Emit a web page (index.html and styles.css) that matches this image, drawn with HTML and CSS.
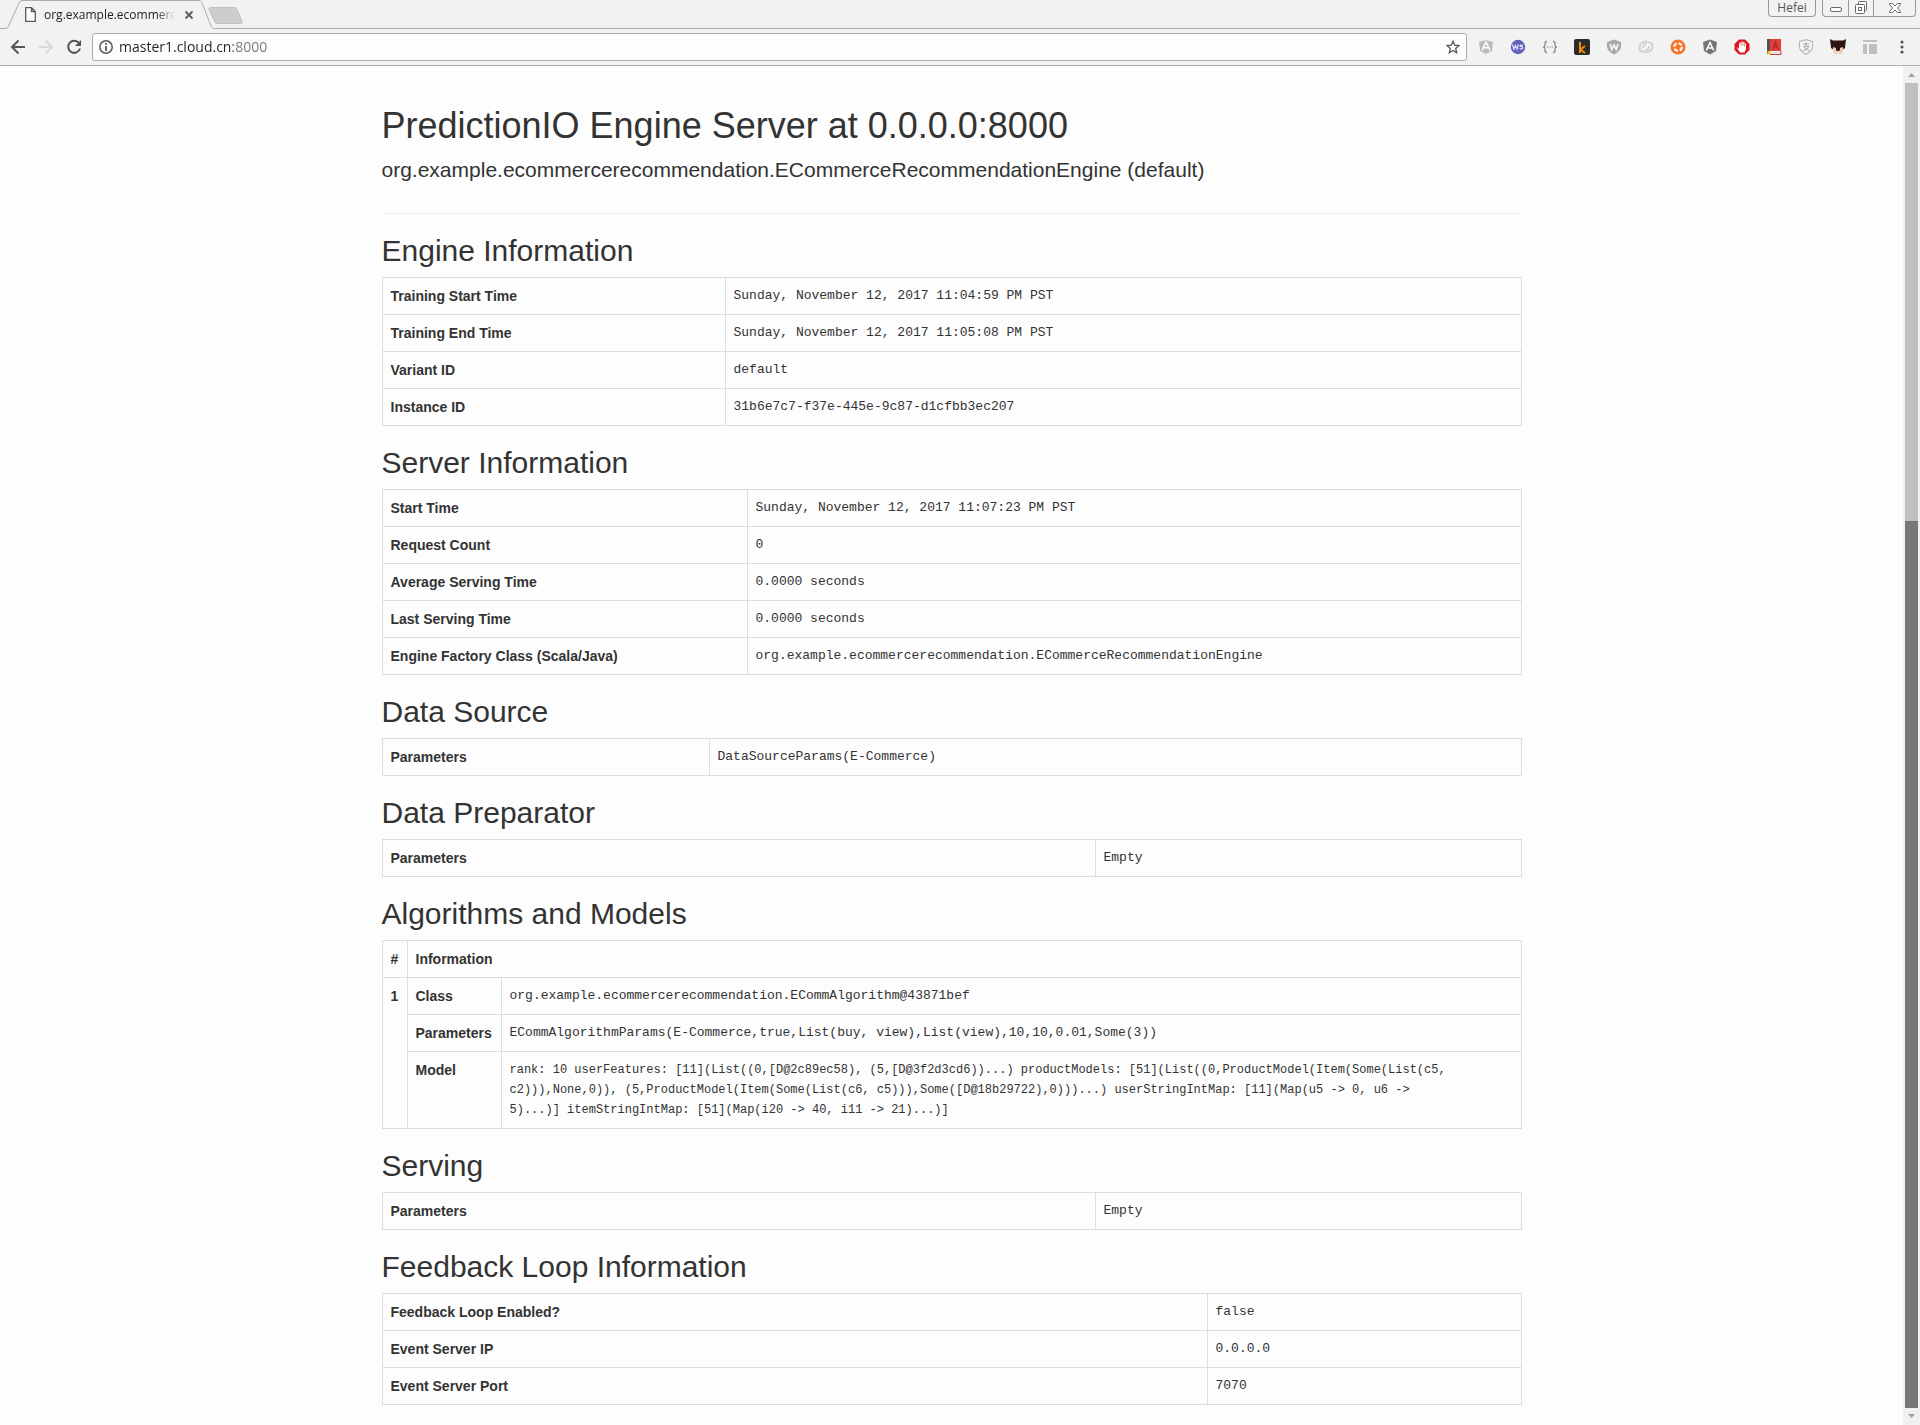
FILE: index.html
```html
<!DOCTYPE html>
<html lang="en">
<head>
<meta charset="utf-8">
<title>org.example.ecommercerecommendation.ECommerceRecommendationEngine (default)</title>
<link rel="stylesheet" href="styles.css">
</head>
<body>
<header class="browser">
  <div class="tabstrip">
    <div class="tab">
      <svg class="tab-shape" width="208" height="29" viewBox="0 0 208 29"><path d="M0 28.500H1Q2 28 3 25L13 3Q14 .5 16 .5H193Q195 .5 196 3L206 26Q207 28.500 208 28.500V29H0Z" fill="#f2f2f2"/><path d="M0 28.500Q2 28.500 3 25L13 3Q14 .5 16 .5H193Q195 .5 196 3L205 26Q206 28.500 208 28.500" fill="none" stroke="#adadad"/></svg>
      <svg class="tab-file" width="11" height="15" viewBox="0 0 11 15"><path d="M.7 .7H6.500L10.300 4.500V14.300H.7ZM6.500 .7V4.500H10.300" fill="#fff" stroke="#5a5a5a" stroke-width="1.300"/></svg>
      <span class="tab-title">org.example.ecommercerecommendation</span>
      <button class="tab-close" type="button" aria-label="Close tab"><svg width="10" height="10" viewBox="0 0 10 10"><path d="M1.500 1.500L8.500 8.500M8.500 1.500L1.500 8.500" stroke="#5a5a5a" stroke-width="1.800"/></svg></button>
    </div>
    <button class="new-tab" type="button" aria-label="New tab"><svg width="36" height="18" viewBox="0 0 36 18"><path d="M3 .5H26Q28 .5 29 2.500L34 14.500Q34.500 16.500 32.500 16.500H9Q7.500 16.500 6.500 14.500L1 2.500Q.5 .5 3 .5Z" fill="#cdcdcd" stroke="#bebebe"/></svg></button>
    <div class="window-controls">
      <button class="profile" type="button">Hefei</button>
      <div class="window-buttons">
        <button type="button" aria-label="Minimize"><svg width="14" height="14" viewBox="0 0 14 14"><rect x="1.500" y="6.500" width="11" height="4" rx="1.500" fill="#fff" stroke="#666"/></svg></button>
        <button type="button" aria-label="Restore"><svg width="14" height="14" viewBox="0 0 14 14"><g fill="#fff" stroke="#666"><rect x="4.500" y=".5" width="8" height="9" rx="1"/><rect x="1.500" y="3.500" width="9" height="9" rx="1"/><rect x="4.500" y="6.500" width="3" height="3"/></g></svg></button>
        <button class="wide" type="button" aria-label="Close"><svg width="14" height="14" viewBox="0 0 14 14"><path d="M1.500 2.500H4.500L7 5L9.500 2.500H12.500V3.500L9.500 7L12.500 10.500V11.500H9.500L7 9L4.500 11.500H1.500V10.500L4.500 7L1.500 3.500Z" fill="#fff" stroke="#666"/></svg></button>
      </div>
    </div>
  </div>
  <div class="toolbar">
    <nav class="nav-buttons">
      <button type="button" aria-label="Back"><svg width="16" height="16" viewBox="0 0 16 16"><path d="M15 8H2.500M8.500 1.500L2 8L8.500 14.500" fill="none" stroke="#555" stroke-width="2"/></svg></button>
      <button type="button" aria-label="Forward"><svg width="16" height="16" viewBox="0 0 16 16"><path d="M1 8H13.500M7.500 1.500L14 8L7.500 14.500" fill="none" stroke="#d8d8d8" stroke-width="2"/></svg></button>
      <button type="button" aria-label="Reload"><svg width="16" height="16" viewBox="0 0 16 16"><path d="M13 4.200A6 6 0 1 0 14 9.500" fill="none" stroke="#555" stroke-width="2"/><path d="M15 1V7H9Z" fill="#555"/></svg></button>
    </nav>
    <div class="omnibox">
      <svg width="14" height="14" viewBox="0 0 14 14"><circle cx="7" cy="7" r="6.200" fill="none" stroke="#5a5a5a" stroke-width="1.500"/><path d="M7 3V4.800M7 6V11" stroke="#5a5a5a" stroke-width="1.800"/></svg>
      <input class="url" type="text" aria-label="Address" value="master1.cloud.cn:8000">
      <button type="button" aria-label="Bookmark"><svg width="14" height="14" viewBox="0 0 14 14"><path d="M7 1.200L8.700 5.200L13 5.600L9.700 8.400L10.700 12.700L7 10.400L3.300 12.700L4.300 8.400L1 5.600L5.300 5.200Z" fill="#fff" stroke="#555" stroke-width="1.300"/></svg></button>
    </div>
    <div class="extensions">
      <button type="button" aria-label="Angular inspector"><svg width="16" height="16" viewBox="0 0 16 16"><path d="M8 1L15 3L14 12L8 15L2 12L1 3Z" fill="#bcbcbc"/><path d="M4 11.500L8 3L12 11.500M5.500 8.800H10.500" fill="none" stroke="#fff" stroke-width="1.500"/></svg></button>
      <button type="button" aria-label="Web socket client"><svg width="16" height="16" viewBox="0 0 16 16"><circle cx="8" cy="8" r="7.200" fill="#6462bd"/><path d="M2.500 5.500L4 10L5.500 6.500L7 10L8.500 5.500M13 6.500Q10 5.500 10.200 7.200Q13.500 8 12.600 9.500Q11 10.500 9.600 9.400" fill="none" stroke="#e4e4fa" stroke-width="1.200"/></svg></button>
      <button type="button" aria-label="JSON viewer"><svg width="16" height="16" viewBox="0 0 16 16"><path d="M5 2.500Q3 2.500 3 4.500V6.500Q3 8 1 8Q3 8 3 9.500V11.500Q3 13.500 5 13.500M11 2.500Q13 2.500 13 4.500V6.500Q13 8 15 8Q13 8 13 9.500V11.500Q13 13.500 11 13.500" fill="none" stroke="#888" stroke-width="1.300"/><path d="M5 8H6.500M7.500 8H8.500M9.500 8H11" stroke="#999"/></svg></button>
      <button type="button" aria-label="Kimono"><svg width="16" height="16" viewBox="0 0 16 16"><rect width="16" height="16" rx="2" fill="#2b2b2b"/><path d="M6 3V14M11 7L6.500 10.500L11 14" fill="none" stroke="#f58a07" stroke-width="2"/></svg></button>
      <button type="button" aria-label="Wappalyzer"><svg width="16" height="16" viewBox="0 0 16 16"><path d="M8 .5L15 3V8Q14 13 8 15.500Q2 13 1 8V3Z" fill="#a9a9a9"/><path d="M4 5L5.800 10.500L8 6L10.200 10.500L12 5" fill="none" stroke="#fff" stroke-width="1.500"/></svg></button>
      <button type="button" aria-label="Sync"><svg width="16" height="16" viewBox="0 0 16 16"><path d="M6.500 13Q1 13 1.500 8Q2.500 3 9 2.500M9.500 3Q15 3 14.500 8Q13.500 13 7 13.500" fill="none" stroke="#d2d2d2" stroke-width="2.200"/><path d="M5 9Q5 5 9 4M11 7Q11 11 7 12" fill="none" stroke="#bbb"/></svg></button>
      <button type="button" aria-label="Rings"><svg width="16" height="16" viewBox="0 0 16 16"><circle cx="8" cy="8" r="7.500" fill="#f5742b"/><circle cx="8" cy="8" r="3.800" fill="none" stroke="#fff" stroke-width="2.200" stroke-dasharray="4 1.970"/></svg></button>
      <button type="button" aria-label="Angular state"><svg width="16" height="16" viewBox="0 0 16 16"><path d="M8 .5L15 3L14 12L8 15.500L2 12L1 3Z" fill="#757575"/><path d="M4.300 11.500L8 3.500L11.700 11.500M5.800 9H10.200" fill="none" stroke="#fff" stroke-width="1.500"/></svg></button>
      <button type="button" aria-label="Ad blocker"><svg width="16" height="16" viewBox="0 0 16 16"><path d="M5 .5H11L15.500 5V11L11 15.500H5L.5 11V5Z" fill="#dd1620"/><path d="M5 5.500V10L3.600 8.300Q2.800 8.500 3.500 9.700L6 13.500H10.500L12 10V4.500H11V7.500H10.500V3H9.200V7H8.700V2.500H7.300V7H6.800V3.500H5.500Z" fill="#fff"/></svg></button>
      <button type="button" aria-label="Dictionary"><svg width="16" height="16" viewBox="0 0 16 16"><path d="M1 0H4V15H1Z" fill="#5b5050"/><path d="M4 0H15V12H4Z" fill="#de4138"/><path d="M3 13H15V14.500H3Z" fill="#ddd"/><path d="M15 12V15.500H4" fill="none" stroke="#c83931"/><path d="M7 10L9.500 3L12 10M8 7.500H11" fill="none" stroke="#b3262b" stroke-width="1.300"/><path d="M1.500 12H4V16L2.500 14.500L1.500 16Z" fill="#f4c20d"/></svg></button>
      <button type="button" aria-label="Payment guard"><svg width="16" height="16" viewBox="0 0 16 16"><path d="M8 .7L14.500 2.500V8Q14 12.500 8 15.300Q2 12.500 1.500 8V2.500Z" fill="#f7f7f7" stroke="#bbb" stroke-width="1.300"/><path d="M4.500 5H11.500M8 3V7M5 7.300H10.800Q9.500 10.500 4.500 12M6 8Q8 11 11.700 11.700" fill="none" stroke="#aaa" stroke-width="1.100"/></svg></button>
      <button type="button" aria-label="Tampering cat"><svg width="16" height="16" viewBox="0 0 16 16"><path d="M0 0L3 1.500H13L16 0L15 9L12 11H4L1 9Z" fill="#2c1714"/><path d="M3 8L6 9V12L8 11L10 12V9L13 8V12L11 15.500H9.500L8 13L6.500 15.500H5L3 12Z" fill="#f4ccb6"/><path d="M6.500 9.500H9.500V12H6.500Z" fill="#2c1714"/></svg></button>
      <button type="button" aria-label="Layout"><svg width="16" height="16" viewBox="0 0 16 16"><path d="M1 1H15V3H1ZM1 5H5V15H1ZM7 5H15V15H7Z" fill="#c0c0c0"/></svg></button>
      <button type="button" aria-label="Menu"><svg width="16" height="16" viewBox="0 0 16 16"><g fill="#555"><circle cx="8" cy="3" r="1.600"/><circle cx="8" cy="8" r="1.600"/><circle cx="8" cy="13" r="1.600"/></g></svg></button>
    </div>
  </div>
</header>
<div class="viewport">
  <main class="page">
    <div class="container">
      <div class="page-header">
        <h1>PredictionIO Engine Server at 0.0.0.0:8000</h1>
        <p class="lead">org.example.ecommercerecommendation.ECommerceRecommendationEngine (default)</p>
      </div>

      <h2>Engine Information</h2>
      <table>
        <colgroup><col class="col-engine"><col></colgroup>
        <tbody>
          <tr><th scope="row">Training Start Time</th><td>Sunday, November 12, 2017 11:04:59 PM PST</td></tr>
          <tr><th scope="row">Training End Time</th><td>Sunday, November 12, 2017 11:05:08 PM PST</td></tr>
          <tr><th scope="row">Variant ID</th><td>default</td></tr>
          <tr><th scope="row">Instance ID</th><td>31b6e7c7-f37e-445e-9c87-d1cfbb3ec207</td></tr>
        </tbody>
      </table>

      <h2>Server Information</h2>
      <table>
        <colgroup><col class="col-server"><col></colgroup>
        <tbody>
          <tr><th scope="row">Start Time</th><td>Sunday, November 12, 2017 11:07:23 PM PST</td></tr>
          <tr><th scope="row">Request Count</th><td>0</td></tr>
          <tr><th scope="row">Average Serving Time</th><td>0.0000 seconds</td></tr>
          <tr><th scope="row">Last Serving Time</th><td>0.0000 seconds</td></tr>
          <tr><th scope="row">Engine Factory Class (Scala/Java)</th><td>org.example.ecommercerecommendation.ECommerceRecommendationEngine</td></tr>
        </tbody>
      </table>

      <h2>Data Source</h2>
      <table>
        <colgroup><col class="col-source"><col></colgroup>
        <tbody>
          <tr><th scope="row">Parameters</th><td>DataSourceParams(E-Commerce)</td></tr>
        </tbody>
      </table>

      <h2>Data Preparator</h2>
      <table>
        <colgroup><col class="col-empty"><col></colgroup>
        <tbody>
          <tr><th scope="row">Parameters</th><td>Empty</td></tr>
        </tbody>
      </table>

      <h2>Algorithms and Models</h2>
      <table>
        <colgroup><col class="col-number"><col class="col-algorithm"><col></colgroup>
        <thead>
          <tr><th scope="col">#</th><th scope="col" colspan="2">Information</th></tr>
        </thead>
        <tbody>
          <tr><th scope="rowgroup" rowspan="3">1</th><th scope="row">Class</th><td>org.example.ecommercerecommendation.ECommAlgorithm@43871bef</td></tr>
          <tr><th scope="row">Parameters</th><td>ECommAlgorithmParams(E-Commerce,true,List(buy, view),List(view),10,10,0.01,Some(3))</td></tr>
          <tr><th scope="row">Model</th><td class="model">rank: 10 userFeatures: [11](List((0,[D@2c89ec58), (5,[D@3f2d3cd6))...) productModels: [51](List((0,ProductModel(Item(Some(List(c5,<br>c2))),None,0)), (5,ProductModel(Item(Some(List(c6, c5))),Some([D@18b29722),0)))...) userStringIntMap: [11](Map(u5 -&gt; 0, u6 -&gt;<br>5)...)] itemStringIntMap: [51](Map(i20 -&gt; 40, i11 -&gt; 21)...)]</td></tr>
        </tbody>
      </table>

      <h2>Serving</h2>
      <table>
        <colgroup><col class="col-empty"><col></colgroup>
        <tbody>
          <tr><th scope="row">Parameters</th><td>Empty</td></tr>
        </tbody>
      </table>

      <h2>Feedback Loop Information</h2>
      <table>
        <colgroup><col class="col-feedback"><col></colgroup>
        <tbody>
          <tr><th scope="row">Feedback Loop Enabled?</th><td>false</td></tr>
          <tr><th scope="row">Event Server IP</th><td>0.0.0.0</td></tr>
          <tr><th scope="row">Event Server Port</th><td>7070</td></tr>
        </tbody>
      </table>
    </div>
  </main>
  <div class="scrollbar" aria-hidden="true">
    <svg width="17" height="17" viewBox="0 0 17 17"><path d="M5 11L8.500 7L12 11Z" fill="#a3a3a3"/></svg>
    <div class="thumb"></div>
    <div class="thumb-active"></div>
    <svg width="17" height="17" viewBox="0 0 17 17"><path d="M5 6L8.500 10L12 6Z" fill="#a3a3a3"/></svg>
  </div>
</div>
</body>
</html>
```
FILE: styles.css
```css
* {
  box-sizing: border-box;
}

body {
  margin: 0;
  min-height: 100vh;
  display: flex;
  flex-direction: column;
  background: #fdfdfd;
  color: #333;
  font: 14px/20px "Liberation Sans", Arial, sans-serif;
}

button {
  display: flex;
  align-items: center;
  justify-content: center;
  padding: 0;
  border: 0;
  background: none;
}

svg {
  display: block;
  flex: none;
}

/* Browser window */
.browser {
  background: #f2f2f2;
  border-bottom: 1px solid #b0b0b0;
}

.tabstrip {
  display: flex;
  height: 29px;
  padding: 0 4px 0 6px;
  background: linear-gradient(#adadad, #adadad) bottom / 100% 1px no-repeat;
}

.tab {
  position: relative;
  display: flex;
  align-items: center;
  width: 204px;
  padding-left: 19px;
}

.tab-shape {
  position: absolute;
  top: 0;
  left: 0;
}

.tab-file,
.tab-title,
.tab-close {
  position: relative;
}

.tab-title {
  width: 132px;
  margin: 0 8px;
  overflow: hidden;
  white-space: nowrap;
  color: #222;
  font: 12px/20px "Open Sans", sans-serif;
  -webkit-mask-image: linear-gradient(to right, #000 112px, transparent);
  mask-image: linear-gradient(to right, #000 112px, transparent);
}

.new-tab {
  align-items: flex-start;
  padding-top: 7px;
  margin-left: -2px;
}

.window-controls {
  display: flex;
  gap: 6px;
  height: 17px;
  margin-left: auto;
}

.profile,
.window-buttons {
  border: 1px solid #999;
  border-top: 0;
  border-radius: 0 0 4px 4px;
}

.profile {
  width: 48px;
  color: #555;
  font: 12px/16px "Open Sans", sans-serif;
}

.window-buttons {
  display: flex;
}

.window-buttons button {
  width: 25px;
}

.window-buttons button + button {
  border-left: 1px solid #999;
}

.window-buttons .wide {
  width: 42px;
}

.toolbar {
  display: flex;
  align-items: center;
  height: 36px;
  padding: 0 10px;
}

.nav-buttons {
  display: flex;
  gap: 12px;
  margin-right: 10px;
}

.omnibox {
  display: flex;
  flex: 1;
  align-items: center;
  gap: 6px;
  height: 28px;
  padding: 0 6px;
  background: #fdfdfd;
  border: 1px solid #adadad;
  border-radius: 3px;
}

.url {
  flex: 1;
  min-width: 0;
  padding: 0;
  border: 0;
  outline: 0;
  font: 14px/20px "Open Sans", sans-serif;
  color: transparent;
  background: linear-gradient(to right, #222 114px, #777 114px);
  -webkit-background-clip: text;
  background-clip: text;
}

.extensions {
  display: flex;
  gap: 16px;
  margin-left: 11px;
}

/* Page */
.viewport {
  display: flex;
  flex: 1;
}

.page {
  flex: 1;
  min-width: 0;
  padding: 0 15px;
}

.container {
  display: flow-root;
  max-width: 1140px;
  margin: 0 auto;
}

.page-header {
  margin: 40px 0 20px;
  padding-bottom: 29px;
  border-bottom: 1px solid #eee;
}

h1,
h2 {
  font-weight: 400;
}

h1 {
  margin: 0 0 10px;
  font-size: 36px;
  line-height: 40px;
}

h2 {
  margin: 20px 0 10px;
  font-size: 30px;
  line-height: 33px;
}

.lead {
  margin: 0;
  font-size: 21px;
  line-height: 28px;
}

table {
  width: 100%;
  margin-bottom: 20px;
  border-collapse: collapse;
  table-layout: fixed;
}

th,
td {
  padding: 8px;
  border: 1px solid #ddd;
  text-align: left;
  vertical-align: top;
}

td {
  font-family: "Liberation Mono", monospace;
  font-size: 13px;
}

.model {
  font-size: 12px;
}

.col-engine { width: 343px; }
.col-server { width: 365px; }
.col-source { width: 327px; }
.col-empty { width: 713px; }
.col-number { width: 25px; }
.col-algorithm { width: 94px; }
.col-feedback { width: 825px; }

.scrollbar {
  display: flex;
  flex-direction: column;
  width: 17px;
  background: #f1f1f1;
}

.thumb,
.thumb-active {
  margin: 0 2px;
}

.thumb {
  height: 438px;
  background: #c0c0c0;
}

.thumb-active {
  flex: 1;
  background: #787876;
}
```
